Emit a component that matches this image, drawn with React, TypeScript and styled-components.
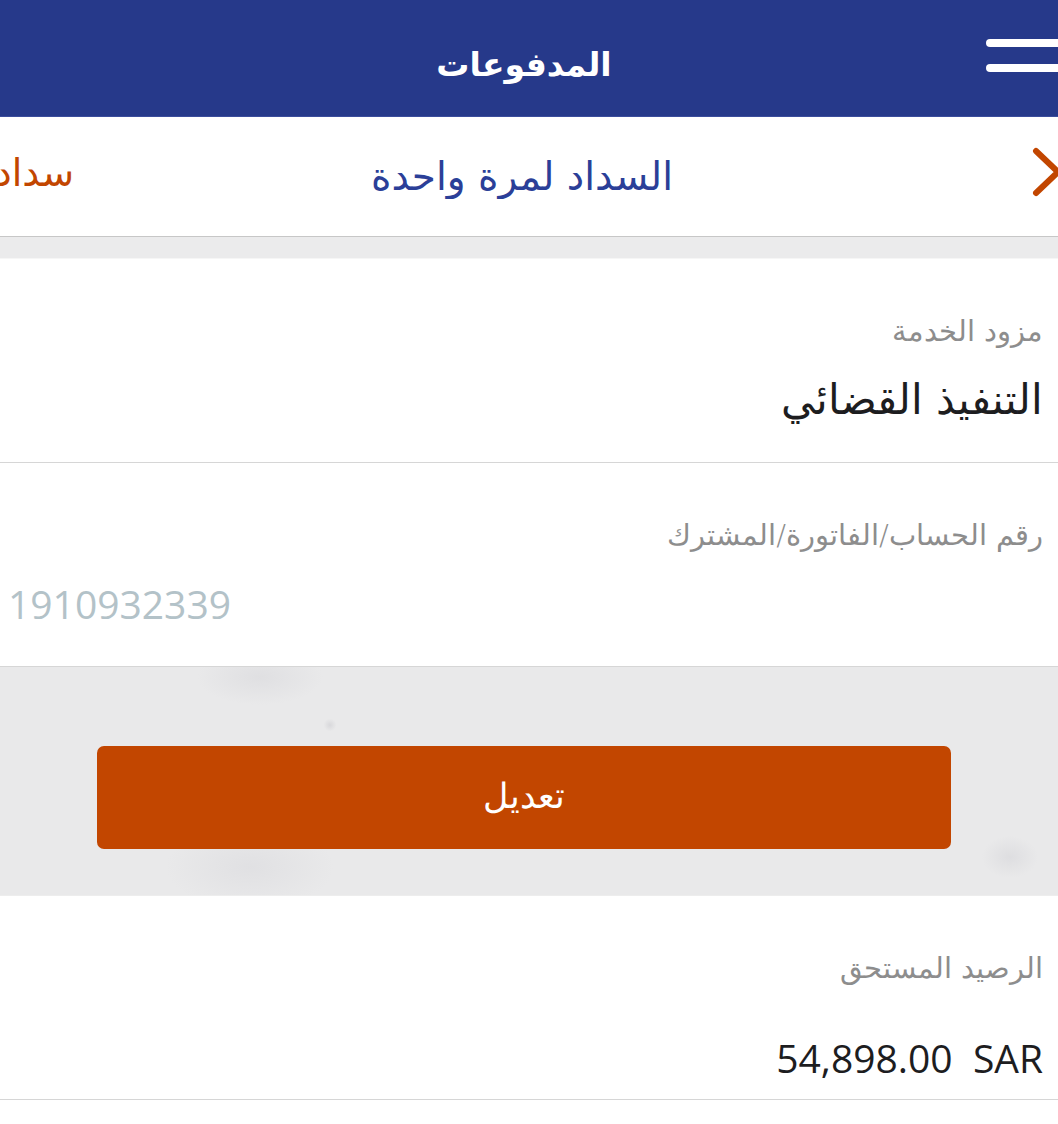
import React from "react";
import styled, { createGlobalStyle } from "styled-components";

const Global = createGlobalStyle`
  html, body { margin: 0; padding: 0; background: #ffffff; }
  body {
    direction: rtl;
    font-family: "DejaVu Sans", "Noto Sans", sans-serif;
    -webkit-font-smoothing: antialiased;
  }
  * { box-sizing: border-box; }
`;

const Page = styled.div`
  width: 1058px;
  min-height: 1124px;
  overflow: hidden;
  background: #ffffff;
`;

const Header = styled.header`
  height: 117px;
  background: #26398a;
  display: grid;
  grid-template-columns: 1fr auto 1fr;
  align-items: center;
  overflow: hidden;
  border-bottom: 1px solid #3b4d9c;
`;

const Burger = styled.button`
  justify-self: start;
  width: 72px;
  height: 33px;
  padding: 0;
  border: 0;
  background: transparent;
  display: flex;
  flex-direction: column;
  justify-content: space-between;
  margin-top: -6px;
`;

const BurgerLine = styled.span`
  display: block;
  height: 8px;
  width: 100%;
  background: #ffffff;
  border-radius: 4px 0 0 4px;
`;

const Title = styled.h1`
  margin: 0;
  color: #ffffff;
  font-size: 33px;
  font-weight: 700;
  padding-right: 10px;
  padding-top: 12px;
  letter-spacing: 0.5px;
`;

const TabBar = styled.nav`
  height: 120px;
  display: grid;
  grid-template-columns: 74px 1fr 74px;
  align-items: center;
  border-bottom: 1px solid #c7c7c7;
  background: #ffffff;
  overflow: hidden;
`;

const Chevron = styled.div`
  justify-self: start;
  display: flex;
  margin-right: -6px;
  margin-top: -10px;
`;

const Tab = styled.div<{ $active?: boolean }>`
  font-size: 39px;
  color: ${(p) => (p.$active ? "#2b3f98" : "#c24600")};
  white-space: nowrap;
  overflow: hidden;
`;

const ClippedTab = styled(Tab)`
  font-size: 38px;
  text-align: right;
  margin-top: -8px;
`;

const ActiveTab = styled(Tab)`
  text-align: center;
  padding-right: 14px;
`;

const Strip = styled.div`
  height: 22px;
  background: #ebebec;
  border-bottom: 1px solid #f6f6f6;
`;

const Field = styled.section<{ $tall?: boolean }>`
  padding: 52px 15px ${(p) => (p.$tall ? "13px" : "34px")} 8px;
  border-bottom: 1px solid #d6d6d6;
  background: #ffffff;
`;

const Label = styled.div`
  font-size: 29px;
  line-height: 40px;
  color: #8d8d8d;
  font-weight: 300;
`;

const Value = styled.div<{ $placeholder?: boolean; $ltr?: boolean; $gap?: number }>`
  margin-top: ${(p) => p.$gap ?? 21}px;
  height: 56px;
  line-height: 56px;
  font-size: ${(p) => (p.$ltr ? "39px" : "42px")};
  font-family: ${(p) =>
    p.$ltr ? '"Open Sans", "DejaVu Sans", sans-serif' : '"DejaVu Sans", sans-serif'};
  font-weight: ${(p) => (p.$ltr ? 400 : 300)};
  color: ${(p) => (p.$placeholder ? "#b3c2c8" : "#1d1d1f")};
  direction: ${(p) => (p.$ltr ? "ltr" : "rtl")};
  text-align: ${(p) => (p.$placeholder ? "left" : "right")};
  white-space: pre;
`;

const ActionArea = styled.div`
  height: 229px;
  padding: 79px 107px 0 97px;
  background-color: #e9e9ea;
  background-image:
    radial-gradient(ellipse 90px 40px at 260px 10px, rgba(205, 205, 210, 0.35), transparent 70%),
    radial-gradient(ellipse 120px 60px at 250px 200px, rgba(208, 208, 213, 0.35), transparent 70%),
    radial-gradient(ellipse 40px 30px at 1010px 190px, rgba(205, 205, 210, 0.4), transparent 70%),
    radial-gradient(circle 8px at 330px 58px, rgba(200, 200, 205, 0.5), transparent 80%);
  border-bottom: 1px solid #ededed;
`;

const ActionButton = styled.button`
  width: 100%;
  height: 103px;
  border: 0;
  border-radius: 7px;
  background: #c24600;
  color: #ffffff;
  font-family: "DejaVu Sans", sans-serif;
  font-size: 35px;
  font-weight: 300;
  display: flex;
  align-items: center;
  justify-content: center;
  padding: 0 0 4px 0;
`;

export default function App() {
  return (
    <Page>
      <Global />
      <Header>
        <Burger aria-label="menu">
          <BurgerLine />
          <BurgerLine />
        </Burger>
        <Title>المدفوعات</Title>
        <div />
      </Header>

      <TabBar>
        <Chevron>
          <svg width="34" height="50" viewBox="0 0 34 50" fill="none">
            <path
              d="M6 4 L28 25 L6 46"
              stroke="#c24600"
              strokeWidth="6"
              strokeLinecap="round"
              strokeLinejoin="round"
            />
          </svg>
        </Chevron>
        <ActiveTab $active>السداد لمرة واحدة</ActiveTab>
        <ClippedTab>سداد متعدد</ClippedTab>
      </TabBar>
      <Strip />

      <Field>
        <Label>مزود الخدمة</Label>
        <Value>التنفيذ القضائي</Value>
      </Field>

      <Field>
        <Label>رقم الحساب/الفاتورة/المشترك</Label>
        <Value $placeholder $ltr>
          1910932339
        </Value>
      </Field>

      <ActionArea>
        <ActionButton>تعديل</ActionButton>
      </ActionArea>

      <Field $tall>
        <Label>الرصيد المستحق</Label>
        <Value $ltr $gap={42}>
          {"54,898.00  SAR"}
        </Value>
      </Field>
    </Page>
  );
}
